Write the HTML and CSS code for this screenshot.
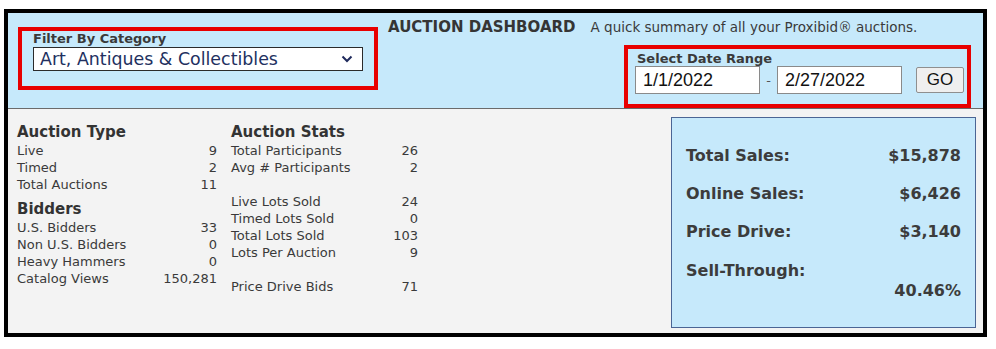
FILE: index.html
```html
<!DOCTYPE html>
<html lang="en">
<head>
    <meta charset="UTF-8">
    <title>Auction Dashboard</title>
    <link rel="stylesheet" href="styles.css">
</head>
<body>
    <div class="frame">
        <header class="top">
            <div class="filter-box">
                <label class="field-label">Filter By Category</label>
                <div class="select">
                    <span>Art, Antiques &amp; Collectibles</span>
                    <svg class="chevron" width="12" height="8" viewBox="0 0 12 8"><path d="M1.5 1.5 L6 6 L10.5 1.5" fill="none" stroke="#1f2a5c" stroke-width="2"/></svg>
                </div>
            </div>
            <div class="summary">
                <div class="title-line">
                    <span class="title">AUCTION DASHBOARD</span>
                    <span class="subtitle">A quick summary of all your Proxibid&reg; auctions.</span>
                </div>
                <div class="date-box">
                    <label class="field-label">Select Date Range</label>
                    <div class="date-row">
                        <input class="date-input" type="text" value="1/1/2022">
                        <span class="dash">-</span>
                        <input class="date-input" type="text" value="2/27/2022">
                        <button class="go">GO</button>
                    </div>
                </div>
            </div>
        </header>

        <main class="stats">
            <div class="col col-type">
                <h3>Auction Type</h3>
                <div class="row"><span>Live</span><span>9</span></div>
                <div class="row"><span>Timed</span><span>2</span></div>
                <div class="row"><span>Total Auctions</span><span>11</span></div>
                <h3 class="sub">Bidders</h3>
                <div class="row"><span>U.S. Bidders</span><span>33</span></div>
                <div class="row"><span>Non U.S. Bidders</span><span>0</span></div>
                <div class="row"><span>Heavy Hammers</span><span>0</span></div>
                <div class="row"><span>Catalog Views</span><span>150,281</span></div>
            </div>
            <div class="col col-stats">
                <h3>Auction Stats</h3>
                <div class="row"><span>Total Participants</span><span>26</span></div>
                <div class="row"><span>Avg # Participants</span><span>2</span></div>
                <div class="row blank"></div>
                <div class="row"><span>Live Lots Sold</span><span>24</span></div>
                <div class="row"><span>Timed Lots Sold</span><span>0</span></div>
                <div class="row"><span>Total Lots Sold</span><span>103</span></div>
                <div class="row"><span>Lots Per Auction</span><span>9</span></div>
                <div class="row blank"></div>
                <div class="row"><span>Price Drive Bids</span><span>71</span></div>
            </div>
            <div class="totals">
                <div class="total-row"><span>Total Sales:</span><span>$15,878</span></div>
                <div class="total-row"><span>Online Sales:</span><span>$6,426</span></div>
                <div class="total-row"><span>Price Drive:</span><span>$3,140</span></div>
                <div class="total-row stacked"><span>Sell-Through:</span><span>40.46%</span></div>
            </div>
        </main>
    </div>
</body>
</html>
```

FILE: styles.css
```css
body {
    margin: 0;
    background-color: #ffffff;
    font-family: "DejaVu Sans", Verdana, sans-serif;
    color: #3a3a3a;
}

.frame {
    box-sizing: border-box;
    width: 983px;
    height: 328px;
    margin: 9px 0 0 4px;
    border: 4px solid #000000;
    display: flex;
    flex-direction: column;
    background-color: #f3f3f3;
}

/* header */

.top {
    background-color: #c6e9fb;
    border-bottom: 1px solid #6b6b6b;
    height: 95px;
    display: flex;
}

.filter-box {
    box-sizing: border-box;
    width: 360px;
    height: 63px;
    margin: 14px 0 0 10px;
    border: 4px solid #e80000;
    padding: 0 0 0 11px;
}

.field-label {
    display: block;
    font-size: 13px;
    font-weight: bold;
    color: #3a3a3a;
    line-height: 15px;
}

.select {
    box-sizing: border-box;
    width: 330px;
    height: 24px;
    margin-top: 1px;
    background-color: #ffffff;
    border: 1px solid #2b2b2b;
    display: flex;
    align-items: center;
    justify-content: space-between;
    padding: 0 9px 0 6px;
    font-size: 17.4px;
    color: #22305f;
}

.summary {
    flex: 1;
    display: flex;
    flex-direction: column;
    align-items: flex-end;
    margin-right: 12px;
}

.title-line {
    align-self: flex-start;
    margin: 5px 0 0 10px;
    line-height: 17px;
}

.title {
    font-size: 15px;
    font-weight: bold;
    color: #353535;
    margin-right: 10px;
}

.subtitle {
    font-size: 13.5px;
    color: #3a3a3a;
}

.date-box {
    box-sizing: border-box;
    width: 347px;
    height: 63px;
    margin-top: 9px;
    border: 4px solid #e80000;
    padding: 3px 0 0 9px;
}

.date-box .field-label {
    line-height: 14px;
}

.date-row {
    display: flex;
    align-items: center;
    margin-left: -2px;
}

.date-input {
    box-sizing: border-box;
    width: 125px;
    height: 28px;
    border: 1px solid #8a8a8a;
    padding: 0 7px;
    font-family: "Liberation Sans", Arial, sans-serif;
    font-size: 18px;
    color: #111111;
    background-color: #ffffff;
}

.dash {
    width: 17px;
    text-align: center;
    font-size: 13px;
    color: #555555;
}

.go {
    box-sizing: border-box;
    width: 48px;
    height: 26px;
    margin-left: 14px;
    border: 1px solid #8f8f8f;
    border-radius: 2px;
    background-color: #efefef;
    font-family: "Liberation Sans", Arial, sans-serif;
    font-size: 17px;
    color: #111111;
    padding: 0;
}

/* body */

.stats {
    flex: 1;
    display: flex;
    align-items: flex-start;
    padding: 0 7px 0 9px;
}

.col {
    padding-top: 14px;
    font-size: 13px;
}

.col-type {
    width: 200px;
}

.col-stats {
    width: 187px;
    margin-left: 14px;
}

.col h3 {
    margin: 0;
    font-size: 15px;
    line-height: 18px;
    color: #333333;
}

.col h3.sub {
    margin-top: 8px;
}

.row {
    display: flex;
    justify-content: space-between;
    line-height: 17px;
    height: 17px;
    padding-top: 1px;
    margin-bottom: -1px;
}

.totals {
    box-sizing: border-box;
    width: 305px;
    height: 211px;
    margin: 8px 0 0 auto;
    background-color: #c6e9fb;
    border: 1px solid #4b6594;
    padding: 28px 14px 0 14px;
    font-size: 16px;
    font-weight: bold;
    color: #3c3c3c;
}

.total-row {
    display: flex;
    justify-content: space-between;
    line-height: 20px;
    margin-bottom: 18px;
}

.total-row.stacked {
    flex-direction: column;
    padding-top: 1px;
}

.total-row.stacked span:last-child {
    align-self: flex-end;
}
```
